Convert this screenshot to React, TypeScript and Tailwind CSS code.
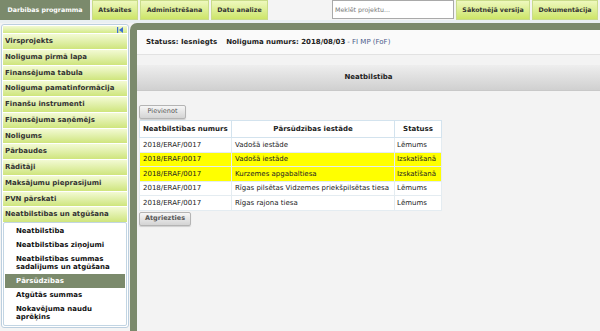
import React from 'react';

const menu = [
  'Virsprojekts',
  'Noliguma pirmā lapa',
  'Finansējuma tabula',
  'Noliguma pamatinformācija',
  'Finanšu instrumenti',
  'Finansējuma saņēmējs',
  'Noligums',
  'Pārbaudes',
  'Rādītāji',
  'Maksājumu pieprasījumi',
  'PVN pārskati',
  'Neatbilstības un atgūšana',
];

const subMenu = [
  { label: 'Neatbilstība' },
  { label: 'Neatbilstības ziņojumi' },
  { label: 'Neatbilstības summas sadalījums un atgūšana' },
  { label: 'Pārsūdzības', active: true },
  { label: 'Atgūtās summas' },
  { label: 'Nokavējuma naudu aprēķins' },
];

const rows = [
  { nr: '2018/ERAF/0017', iestade: 'Vadošā iestāde', status: 'Lēmums', hl: false },
  { nr: '2018/ERAF/0017', iestade: 'Vadošā iestāde', status: 'Izskatīšanā', hl: true },
  { nr: '2018/ERAF/0017', iestade: 'Kurzemes apgabaltiesa', status: 'Izskatīšanā', hl: true },
  { nr: '2018/ERAF/0017', iestade: 'Rīgas pilsētas Vidzemes priekšpilsētas tiesa', status: 'Lēmums', hl: false },
  { nr: '2018/ERAF/0017', iestade: 'Rīgas rajona tiesa', status: 'Lēmums', hl: false },
];

const greenBtn =
  'h-[20px] flex items-center justify-center bg-gradient-to-b from-[#eef8bd] to-[#cde567] border border-[#c9dc8a] text-[6.3px] font-bold text-[#333]';

const grayBtn =
  'h-[14px] flex items-center justify-center rounded-[2px] border border-[#b4b4b4] bg-gradient-to-b from-[#f6f6f6] to-[#d4d4d4] shadow-[0_1px_1px_rgba(0,0,0,0.15)] text-[6.5px] text-[#555]';

export default function App() {
  return (
    <div className="w-[600px] h-[331px] overflow-hidden bg-[#f4f4f4] font-['DejaVu_Sans',Verdana,sans-serif] text-[#222]">
      {/* top bar */}
      <div className="h-[20px] flex justify-between">
        <div className="flex gap-[2px]">
          <div className="w-[90px] h-[20px] flex items-center justify-center bg-[#7b8a6c] text-white text-[6.3px] font-bold">
            Darbibas programma
          </div>
          <div className={`${greenBtn} w-[46px]`}>Atskaites</div>
          <div className={`${greenBtn} w-[69px]`}>Administrēšana</div>
          <div className={`${greenBtn} w-[57px]`}>Datu analize</div>
        </div>
        <div className="flex gap-[2px] pr-[2px]">
          <div className="w-[122px] h-[19px] bg-white border border-[#a9a9a9] flex items-center pl-[2px] text-[6.3px] text-[#777]">
            Meklēt projektu...
          </div>
          <div className={`${greenBtn} w-[74px] h-[19px]`}>Sākotnējā versija</div>
          <div className={`${greenBtn} w-[66px] h-[19px]`}>Dokumentācija</div>
        </div>
      </div>

      <div className="h-[3px] bg-[#eaf0f3]" />

      <div className="flex h-[308px]">
        {/* sidebar */}
        <aside className="w-[128px] ml-px mt-px mr-px h-[304px] border border-[#bccfdf] rounded-[3px] bg-white p-px flex flex-col">
          <div className="h-[8px] mb-px bg-gradient-to-b from-[#f2f9d2] to-[#d4ea86] flex items-center justify-end pr-[4px]">
            <svg width="6" height="6" viewBox="0 0 6 6">
              <rect x="0" y="0" width="1.2" height="6" fill="#3b6fd0" />
              <path d="M6 0 L2 3 L6 6 Z" fill="#3b6fd0" />
            </svg>
          </div>
          {menu.map((m) => (
            <div
              key={m}
              className="h-[14.75px] mb-px shrink-0 flex items-center pl-[2px] bg-gradient-to-b from-[#f3fad3] to-[#cfe57c] text-[7px] font-bold text-[#333]"
            >
              {m}
            </div>
          ))}
          <div className="-mt-px border border-[#c2d5e3] rounded-[2px] bg-white p-px">
            {subMenu.map((s) => (
              <div
                key={s.label}
                className={`py-[3px] pl-[11px] pr-[4px] leading-[8px] text-[7px] font-bold ${
                  s.active ? 'bg-[#7b8a6c] text-white' : 'text-[#111]'
                }`}
              >
                {s.label}
              </div>
            ))}
          </div>
        </aside>

        {/* main */}
        <main className="flex-1 bg-[#7b8a6c] rounded-tl-[7px] pl-[7px] pt-[7px]">
          <div className="h-full bg-[#f3f3f3] rounded-tl-[4px] flex flex-col">
            <div className="h-[25px] bg-[#fafafa] border-b border-[#e2e2e2] flex items-center pl-[9px] text-[7px]">
              <span className="font-bold text-[#222]">Statuss: Iesniegts</span>
              <span className="font-bold text-[#222] ml-[9px]">Noliguma numurs: 2018/08/03</span>
              <span className="ml-[2px] text-[#4b5a8a]">- FI MP (FoF)</span>
            </div>
            <div className="h-[10px]" />
            <div className="h-[26px] bg-gradient-to-b from-[#eeeeee] to-[#d0d0d0] border-b border-[#c8c8c8] flex items-center justify-center text-[7px] font-bold text-[#222]">
              Neatbilstība
            </div>
            <div className="pl-[2px] pt-[14px]">
              <div className={`${grayBtn} w-[47px]`}>Pievienot</div>
              <table className="mt-px w-[302px] table-fixed border-collapse bg-white text-[7px] text-[#222]">
                <colgroup>
                  <col className="w-[92px]" />
                  <col className="w-[163px]" />
                  <col className="w-[47px]" />
                </colgroup>
                <thead>
                  <tr className="h-[17px]">
                    <th className="border border-[#d3e3ee] pl-[3px] text-left font-bold whitespace-nowrap">
                      Neatbilstības numurs
                    </th>
                    <th className="border border-[#d3e3ee] text-center font-bold">Pārsūdzības iestāde</th>
                    <th className="border border-[#d3e3ee] text-center font-bold">Statuss</th>
                  </tr>
                </thead>
                <tbody>
                  {rows.map((r, i) => (
                    <tr key={i} className={`h-[14.5px] ${r.hl ? 'bg-[#ffff00]' : 'bg-white'}`}>
                      <td className="border border-[#e4ecf1] pl-[3px] whitespace-nowrap">{r.nr}</td>
                      <td className="border border-[#e4ecf1] pl-[3px] whitespace-nowrap">{r.iestade}</td>
                      <td className="border border-[#e4ecf1] pl-[2px] whitespace-nowrap">{r.status}</td>
                    </tr>
                  ))}
                </tbody>
              </table>
              <div className={`${grayBtn} mt-px w-[52px] font-bold`}>Atgriezties</div>
            </div>
          </div>
        </main>
      </div>
    </div>
  );
}
